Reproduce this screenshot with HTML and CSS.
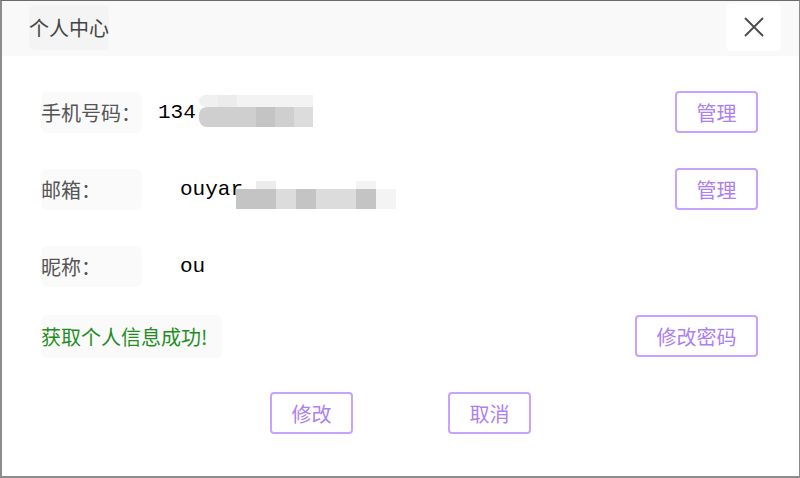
FILE: index.html
```html
<!DOCTYPE html>
<html lang="zh">
<head>
<meta charset="utf-8">
<link rel="stylesheet" href="styles.css">
</head>
<body>
<div class="window">
  <div class="header">
    <div class="title">个人中心</div>
    <div class="close">
      <svg width="22" height="22" viewBox="0 0 22 22"><path d="M2 2 L20 20 M20 2 L2 20" stroke="#4a4a4a" stroke-width="1.8" fill="none"/></svg>
    </div>
  </div>
  <div class="content">
    <div class="row r1">
      <div class="label">手机号码：</div>
      <div class="value v1">134<span class="mosaic m1"><span class="col"><i class="a"></i><i class="b"></i></span><span class="col"><i class="c"></i><i class="b"></i></span><span class="col"><i class="d"></i><i class="b"></i></span><span class="col"><i class="d"></i><i class="e"></i></span><span class="col"><i class="d"></i><i class="b"></i></span><span class="col"><i class="d"></i><i class="f"></i></span></span></div>
      <button class="btn manage">管理</button>
    </div>
    <div class="row r2">
      <div class="label">邮箱：</div>
      <div class="value v2">ouyar<span class="mosaic m2"><span class="col"><i class="n"></i><i class="e"></i></span><span class="col"><i class="c"></i><i class="e"></i></span><span class="col"><i class="n"></i><i class="f"></i></span><span class="col"><i class="n"></i><i class="e"></i></span><span class="col"><i class="n"></i><i class="f"></i></span><span class="col"><i class="n"></i><i class="f"></i></span><span class="col"><i class="d"></i><i class="e"></i></span><span class="col"><i class="n"></i><i class="g"></i></span></span></div>
      <button class="btn manage">管理</button>
    </div>
    <div class="row r3">
      <div class="label">昵称：</div>
      <div class="value v3">ou</div>
    </div>
    <div class="row r4">
      <div class="label ok">获取个人信息成功!</div>
      <button class="btn pwd">修改密码</button>
    </div>
    <div class="actions">
      <button class="btn small">修改</button>
      <button class="btn small">取消</button>
    </div>
  </div>
</div>
</body>
</html>
```

FILE: styles.css
```css
* { box-sizing: border-box; }
html, body { margin: 0; padding: 0; background: #fff; }
body { font-family: "Noto Sans CJK SC", "Noto Sans", sans-serif; }

.window {
  width: 800px;
  height: 478px;
  border: 1px solid #8c8c8c;
  border-left: 2px solid #8c8c8c;
  border-top-color: #6a6a6a;
  border-bottom: 2px solid #8c8c8c;
  background: #fff;
  display: flex;
  flex-direction: column;
}

.header {
  height: 55px;
  background: #f9f9f9;
  display: flex;
  justify-content: space-between;
  align-items: flex-start;
  padding: 4px 18px 0 27px;
}
.title {
  width: 80px;
  height: 45px;
  background: #f4f4f4;
  border-radius: 6px;
  color: #444;
  font-size: 20px;
  line-height: 45px;
  white-space: nowrap;
}
.close {
  width: 55px;
  height: 48px;
  margin-top: -2px;
  background: #fff;
  border-radius: 5px;
  display: flex;
  align-items: center;
  justify-content: center;
}

.content {
  flex: 1;
  display: flex;
  flex-direction: column;
  padding: 35px 41px 0 39px;
}
.row {
  display: flex;
  align-items: center;
  height: 42px;
}
.r2 { margin-top: 35px; }
.r3 { margin-top: 35px; }
.r4 { margin-top: 28px; }

.label {
  width: 101px;
  height: 41px;
  background: #fafafa;
  border-radius: 6px;
  color: #555;
  font-size: 20px;
  line-height: 41px;
  white-space: nowrap;
}
.label.ok {
  width: 181px;
  color: #1f8e1f;
  height: 43px;
  line-height: 43px;
}

.value {
  font-family: "Liberation Mono", monospace;
  font-size: 21px;
  color: #000;
  display: flex;
  align-items: center;
  flex: 1;
}
.v1 { margin-left: 16px; }
.v2 { margin-left: 38px; }
.v3 { margin-left: 38px; }

.mosaic { display: flex; margin-left: 3px; }
.col { display: flex; flex-direction: column; width: 19px; }
.col i { display: block; }
.m1 { margin-top: -2px; }
.m1 .col i:first-child { height: 12px; }
.m1 .col i:last-child { height: 20px; }
.m1 .col:first-child i { border-radius: 8px 0 0 8px; }
.m2 { margin-top: 12px; margin-left: -7px; }
.m2 .col { width: 20px; }
.m2 .col i:first-child { height: 8px; }
.m2 .col i:last-child { height: 20px; }
.col .a { background: #f0f0f0; }
.col .c { background: #ececec; }
.col .d { background: #f3f3f3; }
.col .n { background: transparent; }
.col .b { background: #cfcfcf; }
.col .e { background: #c4c4c4; }
.col .f { background: #dcdcdc; }
.col .g { background: #f4f4f4; }

.btn {
  font-family: "Noto Sans CJK SC", sans-serif;
  background: #fff;
  border: 2px solid #c7a3ff;
  border-radius: 4px;
  color: #ad80f2;
  font-size: 20px;
  height: 42px;
  padding: 0;
  margin-left: auto;
}
.manage { width: 83px; }
.pwd { width: 123px; }

.actions {
  display: flex;
  justify-content: center;
  gap: 95px;
  margin-top: 35px;
  padding-left: 2px;
}
.btn.small { width: 83px; margin-left: 0; }
```
